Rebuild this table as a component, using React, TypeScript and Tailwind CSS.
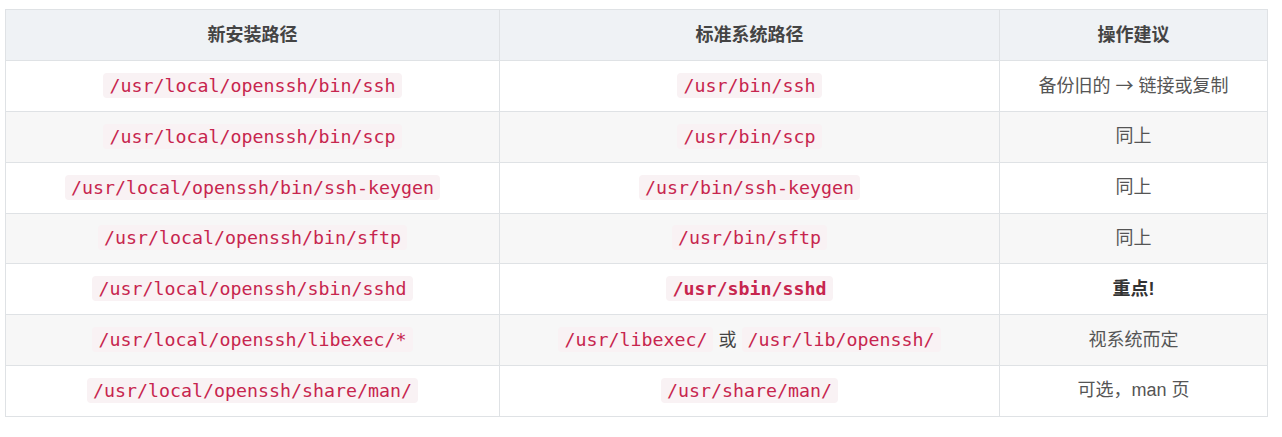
const rows: { a: string; b: React.ReactNode; c: React.ReactNode }[] = [
  {
    a: "/usr/local/openssh/bin/ssh",
    b: <Code>/usr/bin/ssh</Code>,
    c: (
      <>
        备份旧的 <span className="font-['Noto_Sans_CJK_SC',sans-serif]">→</span> 链接或复制
      </>
    ),
  },
  { a: "/usr/local/openssh/bin/scp", b: <Code>/usr/bin/scp</Code>, c: "同上" },
  { a: "/usr/local/openssh/bin/ssh-keygen", b: <Code>/usr/bin/ssh-keygen</Code>, c: "同上" },
  { a: "/usr/local/openssh/bin/sftp", b: <Code>/usr/bin/sftp</Code>, c: "同上" },
  {
    a: "/usr/local/openssh/sbin/sshd",
    b: <Code bold>/usr/sbin/sshd</Code>,
    c: <strong className="font-bold text-[#333]">重点!</strong>,
  },
  {
    a: "/usr/local/openssh/libexec/*",
    b: (
      <>
        <Code>/usr/libexec/</Code> 或 <Code>/usr/lib/openssh/</Code>
      </>
    ),
    c: "视系统而定",
  },
  { a: "/usr/local/openssh/share/man/", b: <Code>/usr/share/man/</Code>, c: "可选，man 页" },
];

function Code({ children, bold }: { children: React.ReactNode; bold?: boolean }) {
  return (
    <code
      className={
        "rounded-[4px] bg-[#f9f2f4] px-[6px] py-[2px] text-[18.3px] text-[#c7254e] font-['DejaVu_Sans_Mono',monospace] " +
        (bold ? "font-bold" : "")
      }
    >
      {children}
    </code>
  );
}

export default function App() {
  return (
    <div className="min-h-[437px] bg-white pl-[5px] pt-[9px] text-[18px] text-[#333] font-['Liberation_Sans','Noto_Sans_CJK_SC',sans-serif]">
      <table className="w-[1262px] table-fixed border-collapse">
        <colgroup>
          <col className="w-[494px]" />
          <col className="w-[500px]" />
          <col className="w-[268px]" />
        </colgroup>
        <thead>
          <tr className="h-[51px] bg-[#eff2f5]">
            <th className="border border-[#dfe2e5] text-center font-bold text-[#444]">新安装路径</th>
            <th className="border border-[#dfe2e5] text-center font-bold text-[#444]">标准系统路径</th>
            <th className="border border-[#dfe2e5] text-center font-bold text-[#444]">操作建议</th>
          </tr>
        </thead>
        <tbody>
          {rows.map((r, i) => (
            <tr key={i} className={"h-[50.85px] " + (i % 2 === 1 ? "bg-[#f7f7f7]" : "bg-white")}>
              <td className="border border-[#dfe2e5] text-center">
                <Code>{r.a}</Code>
              </td>
              <td className="border border-[#dfe2e5] text-center text-[#444]">{r.b}</td>
              <td className="border border-[#dfe2e5] text-center text-[#555]">{r.c}</td>
            </tr>
          ))}
        </tbody>
      </table>
    </div>
  );
}
